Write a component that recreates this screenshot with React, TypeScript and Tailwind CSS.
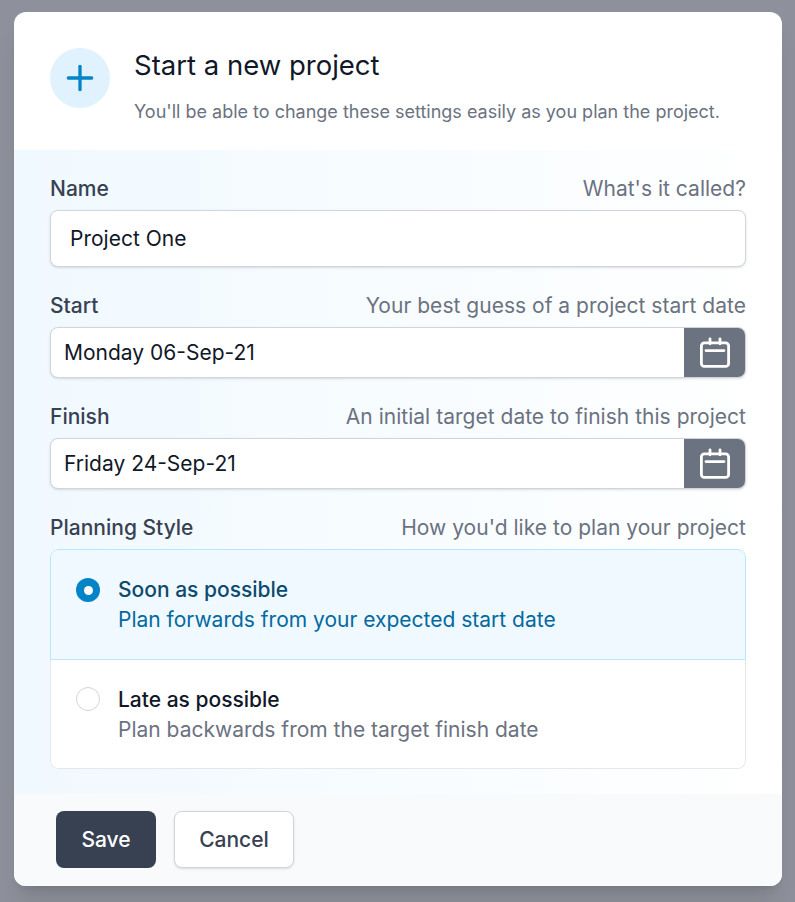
import { Plus } from 'lucide-react';

function CalendarIcon() {
  return (
    <svg width="32" height="32" viewBox="0 0 32 32" fill="none" stroke="white" strokeWidth="2.8" strokeLinecap="round" strokeLinejoin="round">
      <rect x="2.4" y="5.8" width="27.2" height="23.6" rx="3" />
      <path d="M11 1.8v5M21 1.8v5M7 13.6h18" />
    </svg>
  );
}

function Field({ label, hint, children }: { label: string; hint: string; children: React.ReactNode }) {
  return (
    <div>
      <div className="flex items-center justify-between h-[28px] mb-[7px]">
        <span className="text-[21px] font-[450] text-[#374151]">{label}</span>
        <span className="text-[21px] tracking-[0.02px] text-[#6b7280]">{hint}</span>
      </div>
      {children}
    </div>
  );
}

function DateInput({ value }: { value: string }) {
  return (
    <div className="flex h-[51px] rounded-[8px] bg-white border border-[#d1d5db] shadow-sm overflow-hidden">
      <div className="flex-1 flex items-center pl-[13px] text-[21px] text-[#111827]">{value}</div>
      <div className="w-[62px] -my-px -mr-px bg-[#6b7280] flex items-center justify-center">
        <CalendarIcon />
      </div>
    </div>
  );
}

export default function App() {
  return (
    <div className="min-h-[902px] bg-[#8e919b] pt-[12px] px-[13px] font-['Inter',sans-serif]">
      <div className="w-[768px] ml-px rounded-[12px] overflow-hidden bg-white shadow-xl">
        {/* Header */}
        <div className="h-[138px] flex pl-[36px] pt-[36px]">
          <div className="w-[60px] h-[60px] rounded-full bg-[#e0f2fe] flex items-center justify-center text-[#0284c7]">
            <Plus size={40} strokeWidth={2} />
          </div>
          <div className="ml-[24px]">
            <h1 className="text-[27.5px] leading-[34px] font-normal text-[#111827]">Start a new project</h1>
            <p className="mt-[16px] text-[18px] leading-[28px] text-[#6b7280]">You'll be able to change these settings easily as you plan the project.</p>
          </div>
        </div>

        {/* Form */}
        <div className="h-[644px] px-[36px] pt-[25px] bg-gradient-to-r from-[#f0f9ff] to-white">
          <Field label="Name" hint="What's it called?">
            <div className="h-[57px] rounded-[8px] bg-white border border-[#d1d5db] shadow-sm flex items-center pl-[19px] text-[21px] text-[#111827]">Project One</div>
          </Field>
          <div className="mt-[25px]">
            <Field label="Start" hint="Your best guess of a project start date">
              <DateInput value="Monday 06-Sep-21" />
            </Field>
          </div>
          <div className="mt-[25px]">
            <Field label="Finish" hint="An initial target date to finish this project">
              <DateInput value="Friday 24-Sep-21" />
            </Field>
          </div>
          <div className="mt-[25px]">
            <Field label="Planning Style" hint="How you'd like to plan your project">
              <div className="rounded-[8px] overflow-hidden bg-white">
                <div className="h-[111px] rounded-t-[8px] border border-[#bae6fd] bg-[#f0f9ff] flex pl-[25px] pt-[28px]">
                  <div className="w-[24px] h-[24px] rounded-full bg-[#0284c7] flex items-center justify-center">
                    <div className="w-[9px] h-[9px] rounded-full bg-white" />
                  </div>
                  <div className="ml-[18px] -mt-[3px]">
                    <div className="text-[21px] leading-[30px] font-[450] text-[#0c4a6e]">Soon as possible</div>
                    <div className="text-[21px] leading-[30px] text-[#0369a1]">Plan forwards from your expected start date</div>
                  </div>
                </div>
                <div className="h-[109px] rounded-b-[8px] border border-t-0 border-[#e5e7eb] flex pl-[25px] pt-[27px]">
                  <div className="w-[24px] h-[24px] rounded-full bg-white border border-[#d1d5db]" />
                  <div className="ml-[18px] -mt-[2px]">
                    <div className="text-[21px] leading-[30px] font-[450] text-[#111827]">Late as possible</div>
                    <div className="text-[21px] leading-[30px] text-[#6b7280]">Plan backwards from the target finish date</div>
                  </div>
                </div>
              </div>
            </Field>
          </div>
        </div>

        {/* Footer */}
        <div className="h-[92px] bg-[#f9fafb] flex pl-[42px] pt-[17px] gap-[18px]">
          <button className="w-[100px] h-[57px] rounded-[8px] bg-[#374151] text-white text-[21px] font-[450]">Save</button>
          <button className="w-[120px] h-[57px] rounded-[8px] bg-white border border-[#d1d5db] text-[#374151] text-[21px] font-[450] shadow-sm">Cancel</button>
        </div>
      </div>
    </div>
  );
}
